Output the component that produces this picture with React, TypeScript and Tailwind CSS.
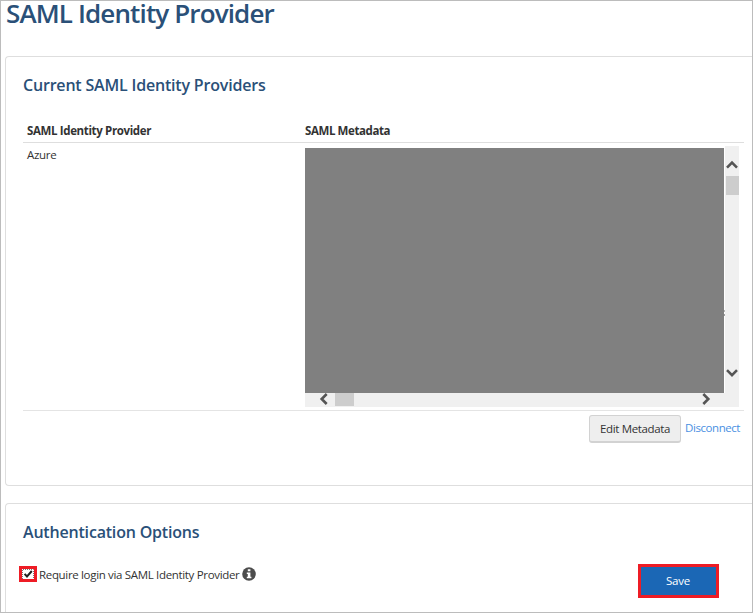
import React from "react";

type Direction = "up" | "down" | "left" | "right";

const chevrons: Record<Direction, string> = {
  up: "M1 8.7 6 3.7 11 8.7",
  down: "M1 3.2 6 8.2 11 3.2",
  left: "M8.7 1 3.7 6 8.7 11",
  right: "M3.3 1 8.3 6 3.3 11",
};

function Chevron({ direction }: { direction: Direction }) {
  return (
    <svg viewBox="0 0 12 12" className="block h-3 w-3 shrink-0" fill="none" stroke="#555555" strokeWidth="2.6">
      <path d={chevrons[direction]} />
    </svg>
  );
}

function MetadataBox() {
  return (
    <div className="mt-[3px] h-[261px] w-[434px] bg-[#f0f0f0]">
      <div className="flex h-[247px]">
        <div className="w-[420px] border-r border-t-2 border-white">
          <div className="h-[245px] bg-[#808080]" />
        </div>
        <div className="relative flex w-[14px] flex-col items-center pt-[13px]">
          <Chevron direction="up" />
          <div className="mt-[5px] h-[19px] w-[13px] bg-[#cdcdcd]" />
          <div className="grow" />
          <Chevron direction="down" />
          <div className="h-[14px] shrink-0" />
          <span className="absolute -left-px top-[164px] h-[2px] w-px bg-[#b5b5b5]" />
          <span className="absolute -left-px top-[168px] h-[2px] w-px bg-[#a0a0a0]" />
        </div>
      </div>
      <div className="flex h-[14px] w-[420px] pl-[13px] pr-[13px]">
        <Chevron direction="left" />
        <div className="ml-[5px] h-[13px] w-[19px] bg-[#cdcdcd]" />
        <div className="grow" />
        <Chevron direction="right" />
      </div>
    </div>
  );
}

export default function App() {
  return (
    <div className="flex h-[613px] w-[753px] flex-col overflow-hidden border border-[#bcbcbc] bg-white pl-1 font-['Open_Sans','Noto_Sans',sans-serif] text-[11.5px] leading-4 text-[#333333]">
      <h1 className="h-[55px] shrink-0 whitespace-nowrap pl-px text-[26px] font-semibold leading-[24px] tracking-[-0.87px] text-[#2a5078]">
        SAML Identity Provider
      </h1>

      <section className="h-[430px] shrink-0 rounded-l border border-r-0 border-[#dedede] pl-[17px]">
        <h2 className="mt-[16px] whitespace-nowrap text-[16px] font-semibold leading-6 tracking-[-0.19px] text-[#2a5078]">
          Current SAML Identity Providers
        </h2>
        <div className="mt-[25px] w-[721px]">
          <div className="grid h-[21px] grid-cols-[278px_1fr] border-b border-[#dedede] pl-1 pt-[1px] font-bold">
            <span className="tracking-[-0.36px]">SAML Identity Provider</span>
            <span className="tracking-[-0.4px]">SAML Metadata</span>
          </div>
          <div className="grid h-[268px] grid-cols-[278px_1fr] border-b border-[#e4e4e4] pl-1">
            <span className="pt-[4px] tracking-[-0.3px]">Azure</span>
            <MetadataBox />
          </div>
          <div className="flex items-start justify-end pr-1 pt-1">
            <button className="h-7 w-[92px] whitespace-nowrap rounded-[3px] border border-b-2 border-[#d2d2d2] bg-[#eeeeee] leading-[26px] tracking-[-0.35px]">
              Edit Metadata
            </button>
            <a className="ml-[4px] mt-[5px] whitespace-nowrap tracking-[-0.44px] text-[#4a90e2]">Disconnect</a>
          </div>
        </div>
      </section>

      <section className="mt-[17px] grow rounded-tl border-l border-t border-[#dedede] pl-[13px]">
        <h2 className="ml-1 mt-[16px] text-[16px] font-semibold leading-6 tracking-[-0.19px] text-[#2a5078]">
          Authentication Options
        </h2>
        <div className="flex pt-5">
          <label className="mt-[2px] flex h-4 items-center">
            <span className="flex h-4 w-[18px] shrink-0 items-center justify-center border-[3px] border-[#ee1c25] bg-white">
              <svg viewBox="0 0 12 10" className="h-[10px] w-3 shrink-0" fill="none">
                <path d="M.5 10V.5H11.5V10" stroke="#777777" strokeDasharray="1 1" />
                <path d="M2.6 4.8 5 7.5 9.8 2" stroke="#222222" strokeWidth="2" />
              </svg>
            </span>
            <span className="ml-[2px] mt-px whitespace-nowrap tracking-[-0.33px]">
              Require login via SAML Identity Provider
            </span>
            <svg viewBox="0 0 14 14" className="ml-[3px] h-[14px] w-[14px] shrink-0">
              <circle cx="7" cy="7" r="6.8" fill="#4d4d4d" />
              <path d="M5.8 2.2h2.6v2H5.8zM4.8 5.4h3.6v4.3h1v1.5H4.8V9.7h1V6.9h-1z" fill="white" />
            </svg>
          </label>
          <button className="ml-auto mr-[33px] h-[34px] w-[81px] border-[3px] border-[#ee1c25] bg-[#1b67b5] pr-px leading-7 tracking-[-0.2px] text-white">
            Save
          </button>
        </div>
      </section>
    </div>
  );
}
